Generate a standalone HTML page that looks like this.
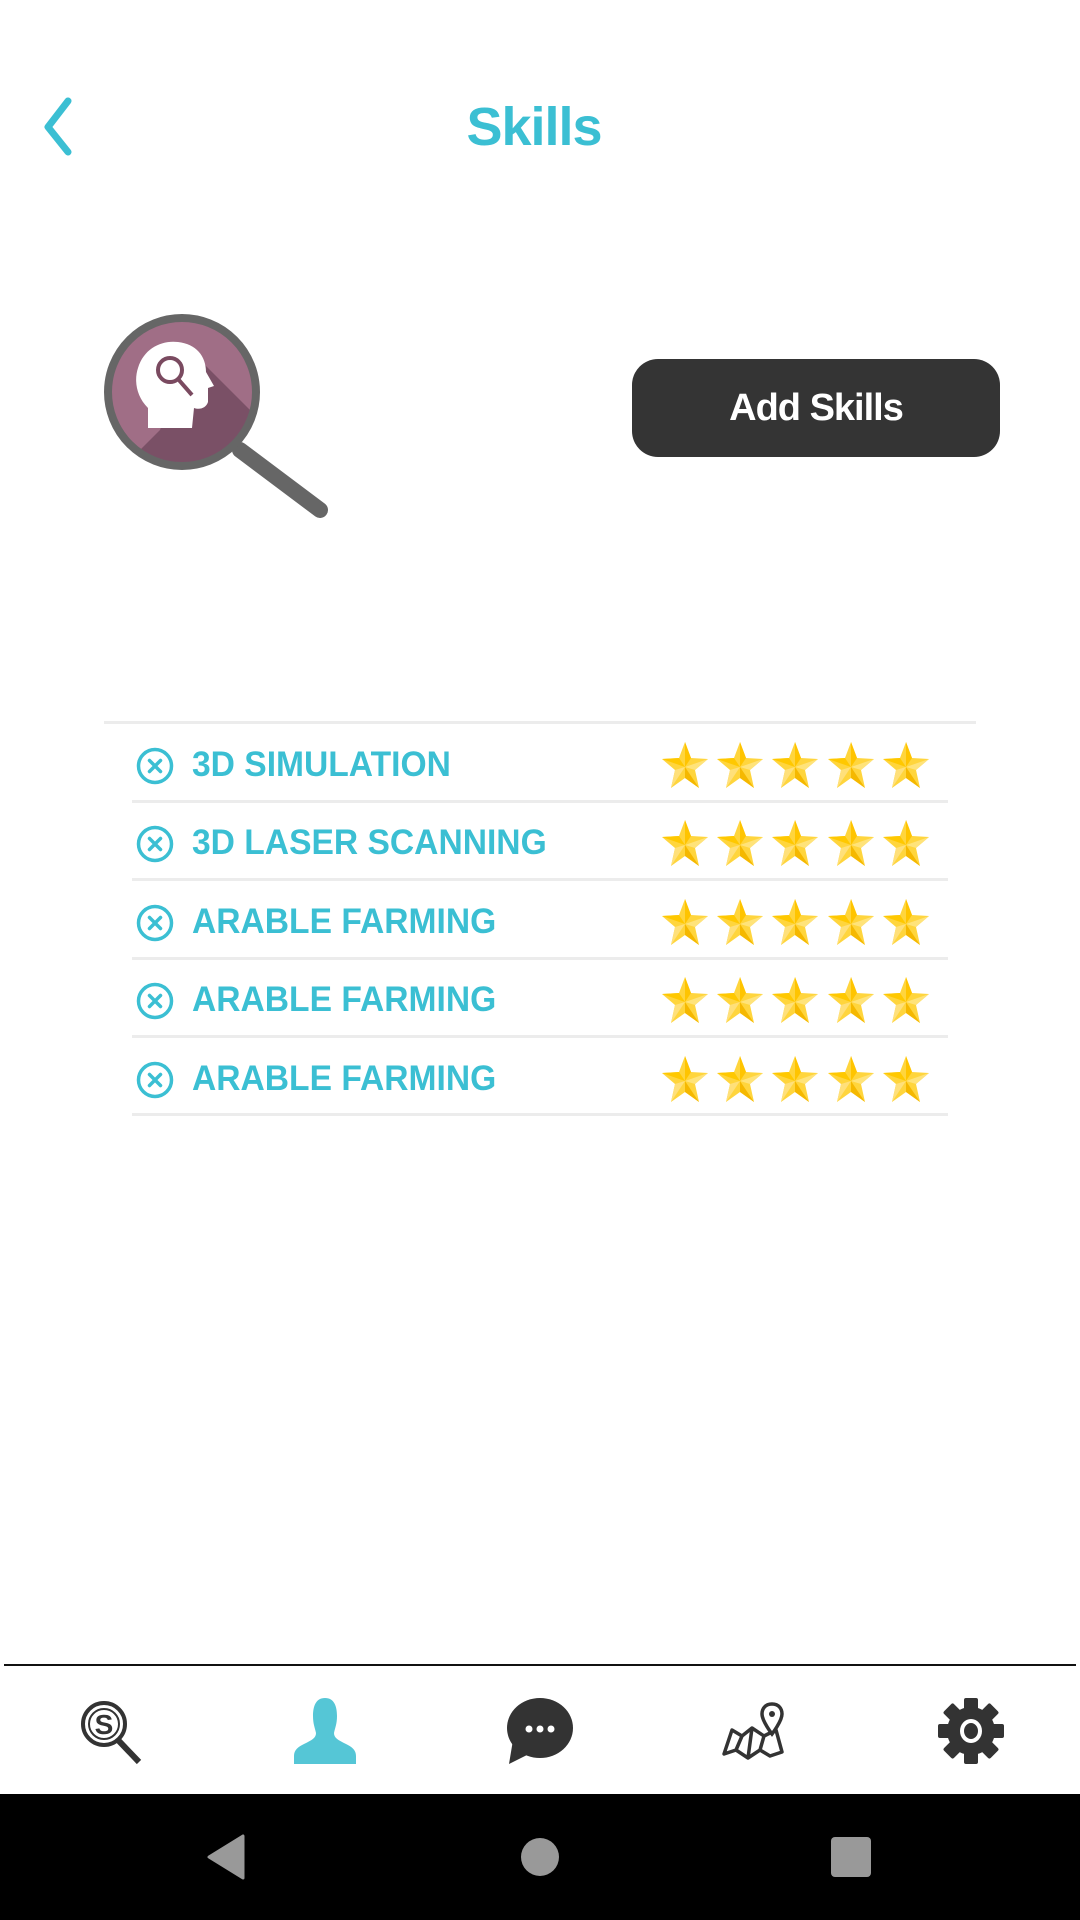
<!DOCTYPE html>
<html><head><meta charset="utf-8"><style>
html,body{margin:0;padding:0;background:#fff;}
body{width:1080px;height:1920px;position:relative;overflow:hidden;font-family:"Liberation Sans",sans-serif;}
.abs{position:absolute;}
.title{left:0;width:1068px;top:96px;text-align:center;font-weight:bold;font-size:54px;color:#3bbfd3;letter-spacing:-1px;}
.btn{left:632px;top:359px;width:368px;height:98px;background:#343434;border-radius:26px;color:#fff;font-weight:bold;font-size:38px;line-height:98px;text-align:center;letter-spacing:-1px;}
.sep{height:3px;background:#ececec;}
.row{left:132px;width:816px;height:60px;}
.lbl{position:absolute;left:60px;top:3px;font-weight:bold;font-size:35px;color:#3bbfd3;transform:scaleX(0.96);transform-origin:left center;white-space:nowrap;line-height:52px;}
.xic{position:absolute;left:3px;top:10px;}
.stars{position:absolute;left:528px;top:4px;}
</style></head><body>
<svg class="abs" style="left:38px;top:96px" width="40" height="60" viewBox="0 0 40 60"><path d="M30 5 L10 31 L30 56" fill="none" stroke="#3bbfd3" stroke-width="7" stroke-linecap="round" stroke-linejoin="round"/></svg>
<div class="abs title">Skills</div>

<svg class="abs" style="left:100px;top:310px" width="240" height="210" viewBox="0 0 240 210">
<defs><clipPath id="c"><circle cx="82" cy="82" r="72"/></clipPath></defs>
<line x1="140" y1="140" x2="220" y2="200" stroke="#666" stroke-width="16" stroke-linecap="round"/>
<circle cx="82" cy="82" r="72" fill="#a06e86"/>
<polygon clip-path="url(#c)" points="90,40 200,150 120,220 40,140 60,120" fill="#7a5066"/>
<circle cx="82" cy="82" r="74" fill="none" stroke="#666" stroke-width="8"/>
<path d="M48 118 L48 98 C36 86 34 70 38 58 C44 38 62 30 78 32 C96 34 106 46 106 62 L114 76 L108 78 L108 92 C106 98 100 100 94 98 L92 118 Z" fill="#fff"/>
<circle cx="70" cy="60" r="12" fill="none" stroke="#7a4a60" stroke-width="4"/>
<line x1="78" y1="69" x2="92" y2="85" stroke="#7a4a60" stroke-width="4"/>
</svg>

<div class="abs btn">Add Skills</div>

<div class="abs sep" style="left:104px;top:721px;width:872px"></div>
<div class="abs sep" style="left:132px;top:800px;width:816px"></div>
<div class="abs sep" style="left:132px;top:878px;width:816px"></div>
<div class="abs sep" style="left:132px;top:957px;width:816px"></div>
<div class="abs sep" style="left:132px;top:1035px;width:816px"></div>
<div class="abs sep" style="left:132px;top:1113px;width:816px"></div>

<svg width="0" height="0" style="position:absolute">
<defs>
<symbol id="st" viewBox="0 0 50 50">
<polygon points="25,2 31,18 48,19 35,30 39,48 25,38 11,48 15,30 2,19 19,18" fill="#ffd53d"/>
<polygon points="25,2 25,27 31,18" fill="#ffc400"/>
<polygon points="48,19 25,27 35,30" fill="#ffe37a"/>
<polygon points="39,48 25,27 25,38" fill="#f5b800"/>
<polygon points="11,48 25,27 15,30" fill="#ffe07a"/>
<polygon points="2,19 25,27 19,18" fill="#ffc800"/>
</symbol>
<symbol id="xc" viewBox="0 0 40 40">
<circle cx="20" cy="20" r="16.5" fill="none" stroke="#3bbfd3" stroke-width="3.5"/>
<path d="M14.5 14.5 L25.5 25.5 M25.5 14.5 L14.5 25.5" stroke="#3bbfd3" stroke-width="3.5" stroke-linecap="round"/>
</symbol>
<symbol id="five" viewBox="0 0 280 50">
<use href="#st" x="0" y="0" width="50" height="50"/>
<use href="#st" x="55" y="0" width="50" height="50"/>
<use href="#st" x="110" y="0" width="50" height="50"/>
<use href="#st" x="166" y="0" width="50" height="50"/>
<use href="#st" x="221" y="0" width="50" height="50"/>
</symbol>
</defs></svg>

<div class="abs row" style="top:736px"><svg class="xic" width="40" height="40"><use href="#xc"/></svg><div class="lbl">3D SIMULATION</div><svg class="stars" width="280" height="50"><use href="#five"/></svg></div>
<div class="abs row" style="top:814px"><svg class="xic" width="40" height="40"><use href="#xc"/></svg><div class="lbl">3D LASER SCANNING</div><svg class="stars" width="280" height="50"><use href="#five"/></svg></div>
<div class="abs row" style="top:893px"><svg class="xic" width="40" height="40"><use href="#xc"/></svg><div class="lbl">ARABLE FARMING</div><svg class="stars" width="280" height="50"><use href="#five"/></svg></div>
<div class="abs row" style="top:971px"><svg class="xic" width="40" height="40"><use href="#xc"/></svg><div class="lbl">ARABLE FARMING</div><svg class="stars" width="280" height="50"><use href="#five"/></svg></div>
<div class="abs row" style="top:1050px"><svg class="xic" width="40" height="40"><use href="#xc"/></svg><div class="lbl">ARABLE FARMING</div><svg class="stars" width="280" height="50"><use href="#five"/></svg></div>

<div class="abs" style="left:4px;top:1664px;width:1072px;height:2px;background:#111"></div>

<svg class="abs" style="left:76px;top:1696px" width="70" height="70" viewBox="0 0 70 70">
<circle cx="28" cy="28" r="21" fill="none" stroke="#333" stroke-width="4"/>
<circle cx="28" cy="28" r="15" fill="none" stroke="#333" stroke-width="2"/>
<text x="28" y="38" text-anchor="middle" font-family="Liberation Sans" font-weight="bold" font-size="28" fill="#333">S</text>
<line x1="42" y1="44" x2="63" y2="66" stroke="#333" stroke-width="6"/>
</svg>
<svg class="abs" style="left:292px;top:1698px" width="66" height="66" viewBox="0 0 66 66">
<path d="M33 0 C24 0 21 8 21 18 C21 26 23 30 24 35 C24 40 20 42 12 46 C6 49 2 52 2 58 L2 66 L64 66 L64 58 C64 52 60 49 54 46 C46 42 42 40 42 35 C43 30 45 26 45 18 C45 8 42 0 33 0 Z" fill="#55c6d6"/>
</svg>
<svg class="abs" style="left:505px;top:1698px" width="68" height="66" viewBox="0 0 68 66">
<ellipse cx="35" cy="30" rx="33" ry="30" fill="#333"/>
<path d="M8 42 L4 66 L24 56 Z" fill="#333"/>
<circle cx="24" cy="31" r="3.5" fill="#fff"/><circle cx="35" cy="31" r="3.5" fill="#fff"/><circle cx="46" cy="31" r="3.5" fill="#fff"/>
</svg>
<svg class="abs" style="left:720px;top:1700px" width="70" height="64" viewBox="0 0 70 64">
<path d="M4 54 L12 30 L22 36 L32 28 L44 36 L56 30 L62 52 L50 56 L40 50 L28 58 L16 50 Z M22 36 L16 50 M32 28 L28 58 M44 36 L40 50" fill="none" stroke="#333" stroke-width="3.5" stroke-linejoin="round"/>
<path d="M52 4 C45 4 42 9 42 14 C42 21 52 34 52 34 C52 34 62 21 62 14 C62 9 59 4 52 4 Z" fill="#fff" stroke="#333" stroke-width="3.5"/>
<circle cx="52" cy="14" r="3" fill="#333"/>
</svg>
<svg class="abs" style="left:938px;top:1698px" width="66" height="66" viewBox="0 0 66 66">
<g fill="#333" transform="translate(33,33)">
<rect x="-7" y="-33" width="14" height="66" rx="2"/>
<rect x="-7" y="-33" width="14" height="66" rx="2" transform="rotate(45)"/>
<rect x="-7" y="-33" width="14" height="66" rx="2" transform="rotate(90)"/>
<rect x="-7" y="-33" width="14" height="66" rx="2" transform="rotate(135)"/>
<circle r="24"/>
</g>
<ellipse cx="33" cy="33" rx="11" ry="12" fill="#fff"/>
<ellipse cx="33" cy="33" rx="7" ry="8" fill="#333"/>
</svg>

<div class="abs" style="left:0;top:1794px;width:1080px;height:126px;background:#000"></div>
<svg class="abs" style="left:205px;top:1834px" width="40" height="46" viewBox="0 0 40 46"><path d="M38 2 L38 44 L4 23 Z" fill="#999" stroke="#999" stroke-width="3" stroke-linejoin="round"/></svg>
<div class="abs" style="left:521px;top:1838px;width:38px;height:38px;border-radius:50%;background:#999"></div>
<div class="abs" style="left:831px;top:1837px;width:40px;height:40px;border-radius:4px;background:#999"></div>
</body></html>
